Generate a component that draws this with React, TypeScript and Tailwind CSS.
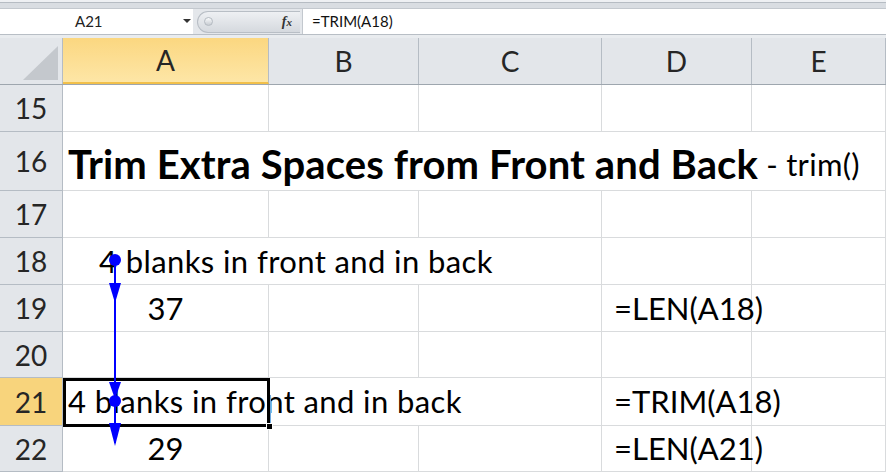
import React from "react";

const FONT = { fontFamily: "Lato, 'Open Sans', sans-serif" };

const cols = [
  { key: "A", w: "w-[206px]" },
  { key: "B", w: "w-[150px]" },
  { key: "C", w: "w-[183px]" },
  { key: "D", w: "w-[150px]" },
  { key: "E", w: "w-[134px]" },
];

function RowHead({ n, h, active }: { n: number; h: string; active?: boolean }) {
  return (
    <div
      className={`${h} w-[63px] shrink-0 flex items-center justify-center border-r border-b border-[#b5bcc4] text-[28px] text-[#262626] ${
        active ? "bg-[#f8d47c]" : "bg-[#e3e6ea]"
      }`}
    >
      {n}
    </div>
  );
}

function Cell({ w, children, className = "" }: { w: string; children?: React.ReactNode; className?: string }) {
  return (
    <div
      className={`${w} shrink-0 h-full border-r border-b border-[#d9dbdd] flex items-center whitespace-pre text-[31px] text-black ${className}`}
    >
      {children}
    </div>
  );
}

function FormulaBar() {
  return (
    <div className="bg-[#dfe3e8]">
      <div className="h-[3px] bg-[#eef0f3] border-b border-[#b6bcc3]" />
      <div className="h-[6px] bg-[#d9dde2] border-b border-[#c3c8ce]" />
      <div className="flex h-[26px] bg-white border-b border-[#b8bec5]">
        <div className="w-[193px] flex items-center relative">
          <span className="ml-[75px] text-[15px] text-[#222]">A21</span>
          <span className="absolute left-[183px] top-[10px] w-0 h-0 border-l-[4px] border-r-[4px] border-t-[4px] border-l-transparent border-r-transparent border-t-[#333]" />
        </div>
        <div className="w-[109px] bg-[#e4e7eb] flex items-center">
          <div className="ml-[4px] h-[22px] w-[103px] rounded-l-full bg-gradient-to-b from-[#eef0f3] to-[#d5d9de] border border-[#b8bec5] border-r-0 flex items-center">
            <span className="ml-[6px] w-[9px] h-[9px] rounded-full bg-gradient-to-b from-[#fafbfc] to-[#c7ccd2] border border-[#b4bac1]" />
            <span
              className="ml-auto mr-[8px] text-[14px] italic font-bold text-[#333]"
              style={{ fontFamily: "'Liberation Serif', serif" }}
            >
              f<span className="text-[11px]">x</span>
            </span>
          </div>
        </div>
        <div className="flex-1 flex items-center border-l border-[#c3c8ce]">
          <span className="ml-[9px] text-[15px] text-[#111]">=TRIM(A18)</span>
        </div>
      </div>
      <div className="h-[3px] bg-[#e9ecef]" />
    </div>
  );
}

function Header() {
  return (
    <div className="flex h-[47px] border-b border-[#9ea6ae]">
      <div className="w-[63px] shrink-0 bg-[#e3e6ea] border-r border-[#b5bcc4]">
        <svg width="62" height="46">
          <polygon points="23,42 58,42 58,8" fill="#c4c8cd" />
        </svg>
      </div>
      {cols.map((c) => (
        <div
          key={c.key}
          className={`${c.w} shrink-0 flex items-center justify-center text-[28px] text-[#262626] border-r border-[#b5bcc4] ${
            c.key === "A" ? "bg-gradient-to-b from-[#fbd780] to-[#fde6a6] border-b-2 border-b-[#f2c04a]" : "bg-[#e3e6ea]"
          }`}
        >
          {c.key}
        </div>
      ))}
    </div>
  );
}

export default function App() {
  return (
    <div className="w-[886px] h-[474px] overflow-hidden bg-white" style={FONT}>
      <FormulaBar />
      <Header />
      <div className="relative">
        {/* 15 */}
        <div className="flex h-[47px]">
          <RowHead n={15} h="h-[47px]" />
          {cols.map((c) => (
            <Cell key={c.key} w={c.w} />
          ))}
        </div>
        {/* 16 */}
        <div className="flex h-[59px]">
          <RowHead n={16} h="h-[59px]" />
          <Cell w="w-[823px]" className="pl-[5px] pt-[6px]">
            <span className="font-bold text-[40px] tracking-[0.1px]">Trim Extra Spaces from Front and Back</span>
            <span className="text-[31px] tracking-[0.3px]"> - trim()</span>
          </Cell>
        </div>
        {/* 17 */}
        <div className="flex h-[47px]">
          <RowHead n={17} h="h-[47px]" />
          {cols.map((c) => (
            <Cell key={c.key} w={c.w} />
          ))}
        </div>
        {/* 18 */}
        <div className="flex h-[47px]">
          <RowHead n={18} h="h-[47px]" />
          <Cell w="w-[539px]" className="pl-[36px] tracking-[0.4px]">
            4 blanks in front and in back
          </Cell>
          <Cell w="w-[150px]" />
          <Cell w="w-[134px]" />
        </div>
        {/* 19 */}
        <div className="flex h-[47px]">
          <RowHead n={19} h="h-[47px]" />
          <Cell w="w-[206px]" className="justify-center">37</Cell>
          <Cell w="w-[150px]" />
          <Cell w="w-[183px]" />
          <Cell w="w-[150px]" className="pl-[12px]">=LEN(A18)</Cell>
          <Cell w="w-[134px]" />
        </div>
        {/* 20 */}
        <div className="flex h-[46px]">
          <RowHead n={20} h="h-[46px]" />
          {cols.map((c) => (
            <Cell key={c.key} w={c.w} />
          ))}
        </div>
        {/* 21 */}
        <div className="flex h-[48px]">
          <RowHead n={21} h="h-[48px]" active />
          <Cell w="w-[539px]" className="pl-[5px] tracking-[0.4px]">
            4 blanks in front and in back
          </Cell>
          <Cell w="w-[150px]" className="pl-[12px]">=TRIM(A18)</Cell>
          <Cell w="w-[134px]" />
        </div>
        {/* 22 */}
        <div className="flex h-[46px]">
          <RowHead n={22} h="h-[46px]" />
          <Cell w="w-[206px]" className="justify-center">29</Cell>
          <Cell w="w-[150px]" />
          <Cell w="w-[183px]" />
          <Cell w="w-[150px]" className="pl-[12px]">=LEN(A21)</Cell>
          <Cell w="w-[134px]" />
        </div>

        {/* selection box on A21 */}
        <div className="absolute left-[63px] top-[293px] w-[207px] h-[49px] border-[3px] border-black pointer-events-none" />
        <div className="absolute left-[266px] top-[338px] w-[7px] h-[7px] bg-black border border-white" />
        <div className="absolute left-[270px] top-[310px] w-[1px] h-[28px] bg-[#6fa8dc]" />

        {/* trace precedents arrows */}
        <svg className="absolute left-0 top-0 pointer-events-none" width="886" height="389">
          <line x1="115" y1="175" x2="115" y2="358" stroke="#0000ff" strokeWidth="2" />
          <circle cx="115" cy="175" r="6" fill="#0000ff" />
          <polygon points="109,198 121,198 115,218" fill="#0000ff" />
          <polygon points="109,297 121,297 115,314" fill="#0000ff" />
          <circle cx="115" cy="316" r="6" fill="#0000ff" />
          <polygon points="109,338 121,338 115,361" fill="#0000ff" />
        </svg>
      </div>
    </div>
  );
}
